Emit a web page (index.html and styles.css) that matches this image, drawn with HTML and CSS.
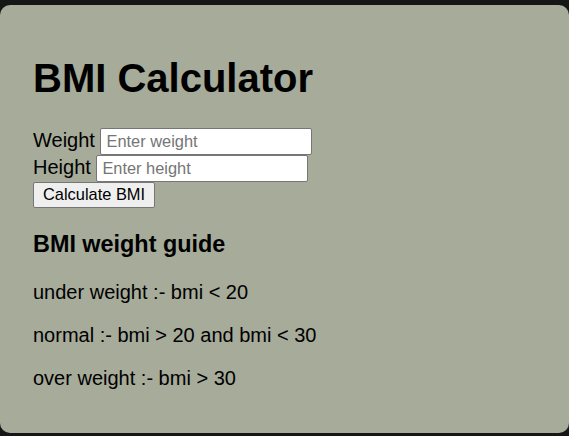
FILE: index.html
```html
<!DOCTYPE html>
<html>
<head>
<meta charset="utf-8">
<link rel="stylesheet" href="styles.css">
</head>
<body>
<div class="card">
  <h1 class="title">BMI Calculator</h1>
  <div class="form">
    <label>Weight <input class="field" type="text" placeholder="Enter weight"></label><br>
    <label>Height <input class="field" type="text" placeholder="Enter height"></label><br>
    <button class="btn">Calculate BMI</button>
  </div>
  <h3 class="guide-title">BMI weight guide</h3>
  <p class="guide">under weight :- bmi &lt; 20</p>
  <p class="guide">normal :- bmi &gt; 20 and bmi &lt; 30</p>
  <p class="guide">over weight :- bmi &gt; 30</p>
</div>
</body>
</html>
```
FILE: styles.css
```css
html, body {
  margin: 0;
  padding: 0;
  background: #151716;
  height: 100%;
}
body {
  font-family: "Liberation Sans", Arial, sans-serif;
  font-size: 20px;
  color: #000;
  padding-top: 5px;
  box-sizing: border-box;
}
.card {
  background: #a6ab9a;
  border-radius: 10px;
  padding: 24px 33px 1px 33px;
  height: 428px;
  box-sizing: border-box;
}
.title {
  font-size: 2em;
  margin: 0.67em 0;
}
.field {
  font-family: "Liberation Sans", Arial, sans-serif;
  font-size: 16.4px;
  width: 212px;
  height: 27px;
  padding: 2px 5px;
  border: 1px solid #767676;
  border-radius: 2px;
  background: #fff;
  box-sizing: border-box;
  vertical-align: baseline;
}
.field::placeholder {
  color: #757575;
}
.btn {
  font-family: "Liberation Sans", Arial, sans-serif;
  font-size: 16.4px;
  height: 26px;
  padding: 0 9px;
  border: 1px solid #767676;
  border-radius: 2px;
  background: #efefef;
  color: #000;
  box-sizing: border-box;
}
.guide-title {
  font-size: 1.17em;
  margin: 1em 0;
}
.guide {
  margin: 1em 0;
}
```
